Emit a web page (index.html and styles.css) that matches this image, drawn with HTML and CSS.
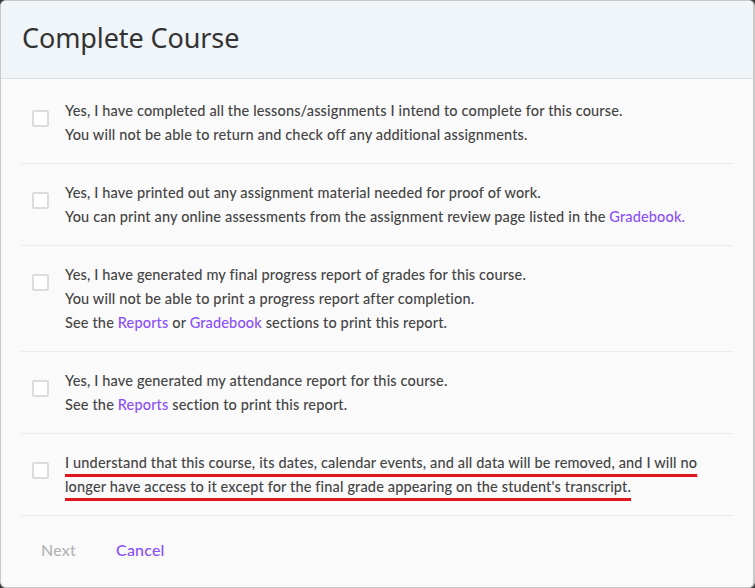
FILE: index.html
```html
<!DOCTYPE html>
<html lang="en">
<head>
<meta charset="utf-8">
<title>Complete Course</title>
<link rel="stylesheet" href="styles.css">
</head>
<body>
<div class="modal">
  <header class="modal-header">
    <h1 class="modal-title">Complete Course</h1>
  </header>
  <div class="modal-body">
    <label class="check-row">
      <input type="checkbox" class="check-box">
      <span class="check-text">Yes, I have completed all the lessons/assignments I intend to complete for this course.<br>You will not be able to return and check off any additional assignments.</span>
    </label>
    <label class="check-row">
      <input type="checkbox" class="check-box">
      <span class="check-text">Yes, I have printed out any assignment material needed for proof of work.<br>You can print any online assessments from the assignment review page listed in the <a class="link" href="#">Gradebook.</a></span>
    </label>
    <label class="check-row">
      <input type="checkbox" class="check-box">
      <span class="check-text">Yes, I have generated my final progress report of grades for this course.<br>You will not be able to print a progress report after completion.<br>See the <a class="link" href="#">Reports</a> or <a class="link" href="#">Gradebook</a> sections to print this report.</span>
    </label>
    <label class="check-row">
      <input type="checkbox" class="check-box">
      <span class="check-text">Yes, I have generated my attendance report for this course.<br>See the <a class="link" href="#">Reports</a> section to print this report.</span>
    </label>
    <label class="check-row">
      <input type="checkbox" class="check-box">
      <span class="check-text"><span class="marked">I understand that this course, its dates, calendar events, and all data will be removed, and I will no<br>longer have access to it except for the final grade appearing on the student's transcript.</span></span>
    </label>
  </div>
  <footer class="modal-footer">
    <button class="btn btn-disabled" type="button" disabled>Next</button>
    <button class="btn btn-link" type="button">Cancel</button>
  </footer>
</div>
</body>
</html>
```
FILE: styles.css
```css
* {
  box-sizing: border-box;
}

html,
body {
  margin: 0;
  height: 100%;
}

body {
  background: #3b3b3b;
  font-family: "Lato", "Open Sans", sans-serif;
}

.modal {
  width: 755px;
  height: 588px;
  display: flex;
  flex-direction: column;
  background: #fafafa;
  border: 1px solid #c9c9c9;
  border-right-width: 2px;
  border-radius: 6px;
  overflow: hidden;
}

.modal-header {
  height: 78px;
  flex: none;
  display: flex;
  align-items: center;
  padding: 0 21px 4px;
  background: #f0f5fa;
  border-bottom: 1px solid #dcdfe3;
}

.modal-title {
  margin: 0;
  font-family: "Noto Sans", sans-serif;
  font-weight: 400;
  font-size: 27px;
  color: #333;
  letter-spacing: -0.1px;
}

.modal-body {
  padding: 3px 20px 0;
}

.check-row {
  display: flex;
  align-items: flex-start;
  gap: 16px;
  padding: 17px 0 16px 11px;
  border-bottom: 1px solid #ebebeb;
  cursor: pointer;
}

.check-box {
  appearance: none;
  -webkit-appearance: none;
  flex: none;
  width: 17px;
  height: 17px;
  margin: 11px 0 0;
  background: #fff;
  border: 2px solid #dcdcdc;
  border-radius: 2px;
}

.check-text {
  font-size: 14.5px;
  line-height: 24px;
  color: #444;
  font-weight: 500;
  letter-spacing: 0.15px;
}

.link {
  color: #8a4ff6;
  text-decoration: none;
}

.marked {
  text-decoration: underline;
  text-decoration-color: #e0141c;
  text-decoration-thickness: 3px;
  text-underline-offset: 6px;
}

.modal-footer {
  display: flex;
  padding: 22px 20px 0;
}

.btn {
  font-family: inherit;
  font-size: 16px;
  font-weight: 500;
  letter-spacing: 0.2px;
  line-height: 24px;
  padding: 0 20px;
  background: none;
  border: 0;
  cursor: pointer;
}

.btn-disabled {
  color: #b4b4b4;
  cursor: default;
}

.btn-link {
  color: #8a4ff6;
}
```
